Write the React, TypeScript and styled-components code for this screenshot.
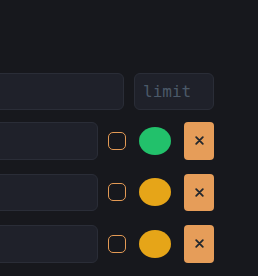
import React from "react";
import styled, { createGlobalStyle } from "styled-components";

const Global = createGlobalStyle`
  html, body { margin: 0; padding: 0; background: #17181d; overflow: hidden; }
  body { font-family: "DejaVu Sans Mono", monospace; }
`;

const Panel = styled.div`
  display: flex;
  flex-direction: column;
  gap: 12.5px;
  padding-top: 73px;
  margin-left: -60px;
  width: 274px;
`;

const List = styled.div`
  display: flex;
  flex-direction: column;
  gap: 14px;
`;

const Row = styled.div`
  display: flex;
  align-items: center;
  height: 37.5px;
`;

const TopRow = styled(Row)`
  height: 36.5px;
  gap: 10px;
`;

const Field = styled.input<{ $w?: number }>`
  box-sizing: border-box;
  height: 100%;
  min-width: 0;
  flex: ${(p) => (p.$w ? `0 0 ${p.$w}px` : "1 1 auto")};
  background: #1f212a;
  border: 1px solid #2a2d37;
  border-radius: 6px;
  padding: 0 8px;
  color: #c8ccd4;
  font-family: "DejaVu Sans Mono", monospace;
  font-size: 16px;
  outline: none;
  &::placeholder { color: #4b5968; }
`;

const Check = styled.span`
  box-sizing: border-box;
  flex: 0 0 18px;
  width: 18px;
  height: 18px;
  margin: 0 13px 0 10px;
  border: 1px solid #e39a55;
  border-radius: 5px;
`;

const Dot = styled.span<{ $c: string }>`
  flex: 0 0 32px;
  width: 32px;
  height: 28px;
  border-radius: 50%;
  background: ${(p) => p.$c};
  margin-right: 13px;
`;

const Remove = styled.button`
  flex: 0 0 30px;
  width: 30px;
  height: 100%;
  padding: 0;
  border: none;
  border-radius: 4px;
  background: #e69d59;
  display: flex;
  align-items: center;
  justify-content: center;
  cursor: pointer;
`;

const XIcon = () => (
  <svg width="9" height="9" viewBox="0 0 9 9">
    <path d="M1.2 1.2L7.8 7.8M7.8 1.2L1.2 7.8" stroke="#22272d" strokeWidth="1.8" strokeLinecap="round" />
  </svg>
);

const items = ["#22c16b", "#e6a518", "#e6a518"];

export default function App() {
  return (
    <>
      <Global />
      <Panel>
        <TopRow>
          <Field />
          <Field $w={80} placeholder="limit" />
        </TopRow>
        <List>
          {items.map((c, i) => (
            <Row key={i}>
              <Field />
              <Check />
              <Dot $c={c} />
              <Remove>
                <XIcon />
              </Remove>
            </Row>
          ))}
        </List>
      </Panel>
    </>
  );
}
